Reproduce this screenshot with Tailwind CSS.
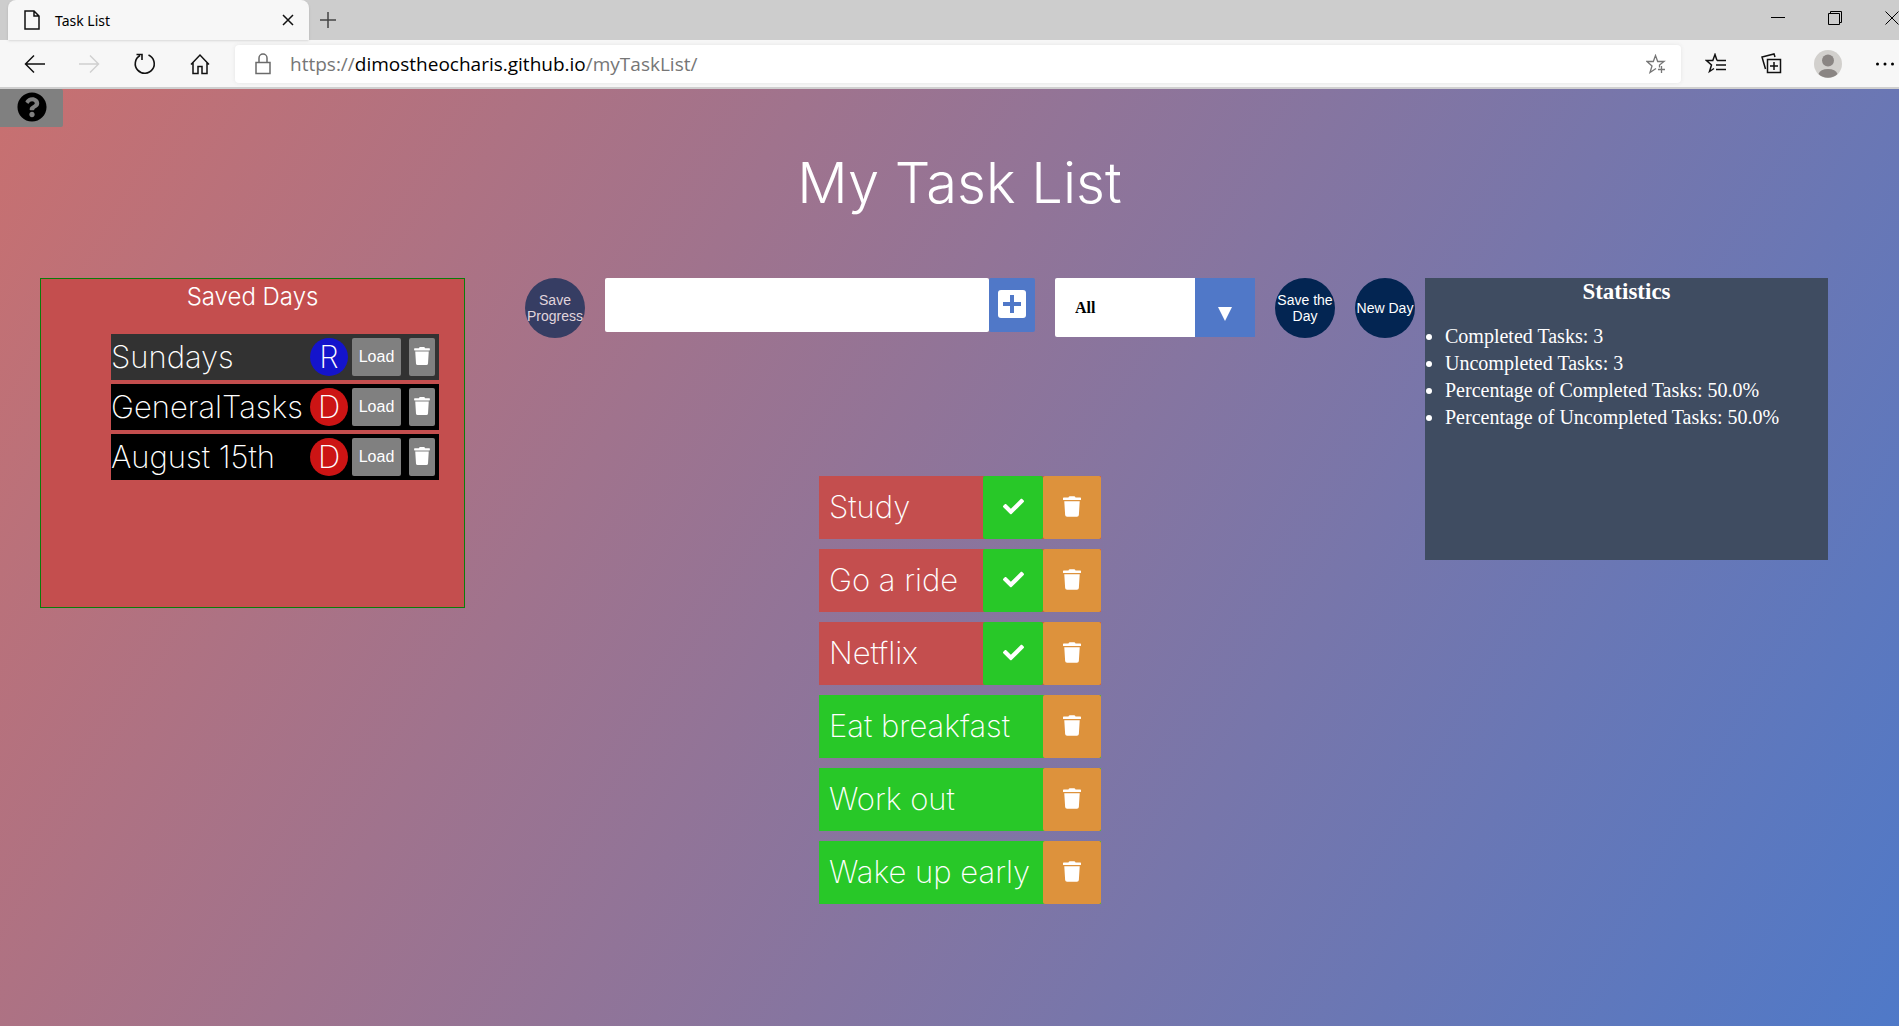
<!DOCTYPE html>
<html lang="en">
<head>
<meta charset="utf-8">
<title>Task List</title>
<script src="https://cdn.jsdelivr.net/npm/@tailwindcss/browser@4"></script>
</head>
<body class="flex min-h-screen flex-col overflow-x-hidden font-['Liberation_Serif',serif]">
<svg class="hidden">
  <symbol id="trash" viewBox="0 0 448 512"><path fill="currentColor" d="M432 32H312l-9.400-18.700A24 24 0 0 0 281.100 0H166.800a23.700 23.700 0 0 0-21.400 13.300L136 32H16A16 16 0 0 0 0 48v32a16 16 0 0 0 16 16h416a16 16 0 0 0 16-16V48a16 16 0 0 0-16-16zM53.200 467a48 48 0 0 0 47.900 45h245.800a48 48 0 0 0 47.900-45L416 128H32z"/></symbol>
  <symbol id="check" viewBox="0 0 512 512"><path fill="currentColor" d="M173.900 439.400l-166.400-166.400c-10-10-10-26.200 0-36.200l36.200-36.200c10-10 26.200-10 36.200 0L192 312.700 432.100 72.600c10-10 26.200-10 36.200 0l36.200 36.200c10 10 10 26.200 0 36.200l-294.400 294.400c-10 10-26.200 10-36.200 0z"/></symbol>
</svg>

<header class="font-['Noto_Sans',sans-serif]">
  <div class="flex h-10 items-center bg-[#cdcdcd]">
    <div class="ml-2 flex h-10 w-[301px] items-center rounded-t-lg bg-[#f7f7f7] pr-[11px] pl-4 shadow">
      <svg class="h-5 w-4" viewBox="0 0 16 20" fill="none" stroke="#111" stroke-width="1.500"><path d="M1 1h9l5 5v13H1zM10 1v5h5"/></svg>
      <span class="ml-[15px] flex-1 text-[14px]">Task List</span>
      <button aria-label="Close tab" class="p-1"><svg class="size-3" viewBox="0 0 12 12" stroke="#111" stroke-width="1.500"><path d="M1 1l10 10M11 1L1 11"/></svg></button>
    </div>
    <button aria-label="New tab" class="ml-[11px]"><svg class="size-4" viewBox="0 0 16 16" stroke="#444" stroke-width="1.500"><path d="M8 0v16M0 8h16"/></svg></button>
    <div class="ml-auto flex items-center gap-[43px] pb-1">
      <button aria-label="Minimize"><svg class="size-[14px]" viewBox="0 0 14 14" stroke="#000"><path d="M0 6.500h14"/></svg></button>
      <button aria-label="Restore"><svg class="size-[14px]" viewBox="0 0 14 14" fill="none" stroke="#000"><path d="M.5 2.500h11v11H.5zM2.500 2.500V.5h11v11h-2"/></svg></button>
      <button aria-label="Close"><svg class="size-[14px]" viewBox="0 0 14 14" stroke="#000"><path d="M.5.5l13 13M13.500.5l-13 13"/></svg></button>
    </div>
  </div>
  <div class="flex h-[49px] items-center border-b-2 border-[#cfcfcf] bg-[#f7f7f7] pl-6">
    <button aria-label="Back"><svg class="size-[22px]" viewBox="0 0 22 22" fill="none" stroke="#111" stroke-width="1.500"><path d="M21 11H2M10 2.500L1.500 11l8.500 8.500"/></svg></button>
    <button aria-label="Forward" class="ml-8"><svg class="size-[22px]" viewBox="0 0 22 22" fill="none" stroke="#d0d0d0" stroke-width="1.500"><path d="M1 11h19M12 2.500l8.500 8.500-8.500 8.500"/></svg></button>
    <button aria-label="Reload" class="ml-[33px]"><svg class="size-[24px]" viewBox="0 0 24 24" fill="none" stroke="#111" stroke-width="1.600"><path d="M15.500 3A9.500 9.500 0 1 1 7 3.500M3.500 2.500h5.500v5.500"/></svg></button>
    <button aria-label="Home" class="ml-8"><svg class="size-[22px]" viewBox="0 0 22 22" fill="none" stroke="#111" stroke-width="1.500"><path d="M2 11.500L11 2l9 9.500M4 9.500V20.500h5v-7h4v7h5V9.500"/></svg></button>
    <div class="ml-6 flex h-[38px] flex-1 items-center rounded bg-white pr-[15px] pl-5 shadow-[0_0_4px_#e4e4e4]">
      <svg class="h-[22px] w-4" viewBox="0 0 16 22" fill="none" stroke="#6b6b6b" stroke-width="1.500"><path d="M1 9.500h14v11H1zM4 9.500V5a4 4 0 0 1 8 0v4.500"/></svg>
      <a href="https://dimostheocharis.github.io/myTaskList/" class="ml-[19px] flex-1 pt-0.5 font-['Open_Sans'] text-[19px] text-[#767676]">https://<span class="text-black">dimostheocharis.github.io</span>/myTaskList/</a>
      <button aria-label="Add to favorites"><svg class="size-[20px]" viewBox="0 0 20 20" fill="none" stroke="#767676" stroke-width="1.300"><path d="M10 14.500L4 18.500 6 12 1 7.500h6.300L9.500 1.500l2.200 6H18L13.500 11V13.500M15.500 12v7M12 15.500h7"/></svg></button>
    </div>
    <div class="flex items-center pr-1 pl-6">
      <button aria-label="Favorites"><svg class="size-[22px]" viewBox="0 0 22 22" fill="none" stroke="#111" stroke-width="1.500"><path d="M12 7.500L10 1.500l-2.200 6H1.500l5 4.500-2 6.500 4.500-3M12 7.500h9M11 12h10M11 16.500h10"/></svg></button>
      <button aria-label="Collections" class="ml-[34px]"><svg class="size-[21px]" viewBox="0 0 21 21" fill="none" stroke="#111" stroke-width="1.500"><path d="M6.500 6.500h13v13h-13zM13 9v8M9 13h8M4.500 16L1 4l12-3 1 3"/></svg></button>
      <button aria-label="Profile" class="ml-8"><svg class="size-7" viewBox="0 0 28 28"><circle cx="14" cy="14" r="14" fill="#d2d0cd"/><circle cx="14" cy="10.500" r="6" fill="#8a8583"/><path fill="#8a8583" d="M4.500 24a9.800 6.500 0 0 1 19 0 14 14 0 0 1-19 0z"/></svg></button>
      <button aria-label="More" class="ml-[33px]"><svg class="h-1 w-5" viewBox="0 0 20 4"><circle cx="2.500" cy="2" r="1.500"/><circle cx="10" cy="2" r="1.500"/><circle cx="17.500" cy="2" r="1.500"/></svg></button>
    </div>
  </div>
</header>

<main class="flex-1 bg-[linear-gradient(120deg,#c87070,#4f79c8)]">
  <button aria-label="Help" class="flex h-[38px] w-[63px] justify-center rounded-r-xs bg-[#808080] pt-[3px]"><svg class="size-[30px]" viewBox="0 0 512 512"><path d="M504 256c0 137-111 248-248 248S8 393 8 256C8 119 119 8 256 8s248 111 248 248zM262.700 90c-54.500 0-89.300 23-116.500 63.800-3.500 5.300-2.400 12.400 2.700 16.300l34.700 26.300c5.200 3.900 12.600 3 16.700-2.100 17.900-22.700 30.100-35.800 57.300-35.800 20.400 0 45.700 13.100 45.700 33 0 15-12.400 22.700-32.500 34C247 238.500 216 254.900 216 296v4c0 6.600 5.400 12 12 12h56c6.600 0 12-5.400 12-12v-1.300c0-28.500 83.200-29.600 83.200-106.700 0-58-60.200-102-116.500-102zM256 338c-25.400 0-46 20.600-46 46s20.600 46 46 46 46-20.600 46-46-20.600-46-46-46z"/></svg></button>
  <h1 class="mt-5 ml-5 text-center font-['Inter'] text-[56px] leading-[72px] font-light text-white">My Task List</h1>

  <div class="mt-[59px] flex items-start pr-[71px] pl-10">
    <section class="min-h-[330px] w-[425px] shrink-0 border border-[#0a7d0a] bg-[#c44e4e]">
      <h2 class="pt-[2px] text-center font-['Inter'] text-[24px] leading-8 font-light text-white">Saved Days</h2>
      <ul class="mt-[21px] mr-[25px] ml-[70px] flex flex-col gap-1 font-['Inter'] text-[31px] font-extralight text-white">
        <li class="flex h-[46px] items-center bg-[#323232] pr-1"><span class="flex-1">Sundays</span><span class="flex size-[38px] items-center justify-center rounded-full bg-[#1414cc]">R</span><button class="ml-1 h-[38px] w-[49px] rounded-xs bg-[#808080] font-['Liberation_Sans'] text-[16px] font-normal">Load</button><button aria-label="Delete" class="ml-2 flex h-[38px] w-[26px] justify-center rounded-xs bg-[#808080] pt-[9px]"><svg class="h-[18px] w-4"><use href="#trash"/></svg></button></li>
        <li class="flex h-[46px] items-center bg-black pr-1"><span class="flex-1">GeneralTasks</span><span class="flex size-[38px] items-center justify-center rounded-full bg-[#cc1414]">D</span><button class="ml-1 h-[38px] w-[49px] rounded-xs bg-[#808080] font-['Liberation_Sans'] text-[16px] font-normal">Load</button><button aria-label="Delete" class="ml-2 flex h-[38px] w-[26px] justify-center rounded-xs bg-[#808080] pt-[9px]"><svg class="h-[18px] w-4"><use href="#trash"/></svg></button></li>
        <li class="flex h-[46px] items-center bg-black pr-1"><span class="flex-1">August 15th</span><span class="flex size-[38px] items-center justify-center rounded-full bg-[#cc1414]">D</span><button class="ml-1 h-[38px] w-[49px] rounded-xs bg-[#808080] font-['Liberation_Sans'] text-[16px] font-normal">Load</button><button aria-label="Delete" class="ml-2 flex h-[38px] w-[26px] justify-center rounded-xs bg-[#808080] pt-[9px]"><svg class="h-[18px] w-4"><use href="#trash"/></svg></button></li>
      </ul>
    </section>

    <section class="mr-[10px] ml-10 flex-1">
      <div class="flex items-start gap-5 pl-5 font-['Liberation_Sans',sans-serif] text-[14px] leading-4 text-white">
        <button class="size-[60px] shrink-0 rounded-full bg-[#363d63] text-[#e0d5dd]">Save Progress</button>
        <form class="flex flex-1">
          <input type="text" aria-label="New task" class="h-[54px] w-0 flex-1 rounded-xs bg-white px-3 text-black outline-none">
          <button type="button" aria-label="Add task" class="flex h-[54px] w-[46px] justify-center rounded-xs bg-[#5078c8] pt-3"><svg class="size-[28px]" viewBox="0 0 28 28"><rect y="0" width="28" height="28" rx="3" fill="#fff"/><path d="M14 5v18M5 14h18" stroke="#5078c8" stroke-width="4"/></svg></button>
        </form>
        <div class="relative h-[59px] w-[200px] shrink-0">
          <select aria-label="Filter tasks" class="size-full appearance-none rounded-xs bg-white pl-5 font-['Liberation_Serif'] text-[16px] font-bold text-black"><option>All</option><option>Completed</option><option>Uncompleted</option></select>
          <span class="pointer-events-none absolute inset-y-0 right-0 flex w-[60px] items-center justify-center bg-[#5078c8] pt-3"><svg class="size-[14px]" viewBox="0 0 14 14"><path fill="#fff" d="M0 0h14L7 14z"/></svg></span>
        </div>
        <button class="size-[60px] shrink-0 rounded-full bg-[#032552]">Save the Day</button>
        <button class="size-[60px] shrink-0 rounded-full bg-[#032552] whitespace-nowrap">New Day</button>
      </div>
      <ul class="mx-auto mt-[138px] flex w-[282px] flex-col gap-[10px] font-['Inter'] text-[31px] font-extralight text-white">
        <li class="flex h-[63px] items-center bg-[#c44e4e]"><span class="flex-1 pl-[10px] whitespace-nowrap">Study</span><button aria-label="Complete" class="flex h-full w-[60px] justify-center rounded-xs bg-[#28c828] pt-5"><svg class="size-[21px]"><use href="#check"/></svg></button><button aria-label="Delete" class="flex h-full w-[58px] justify-center rounded-xs bg-[#dd923c] pt-5"><svg class="h-[21px] w-[18px]"><use href="#trash"/></svg></button></li>
        <li class="flex h-[63px] items-center bg-[#c44e4e]"><span class="flex-1 pl-[10px] whitespace-nowrap">Go a ride</span><button aria-label="Complete" class="flex h-full w-[60px] justify-center rounded-xs bg-[#28c828] pt-5"><svg class="size-[21px]"><use href="#check"/></svg></button><button aria-label="Delete" class="flex h-full w-[58px] justify-center rounded-xs bg-[#dd923c] pt-5"><svg class="h-[21px] w-[18px]"><use href="#trash"/></svg></button></li>
        <li class="flex h-[63px] items-center bg-[#c44e4e]"><span class="flex-1 pl-[10px] whitespace-nowrap">Netflix</span><button aria-label="Complete" class="flex h-full w-[60px] justify-center rounded-xs bg-[#28c828] pt-5"><svg class="size-[21px]"><use href="#check"/></svg></button><button aria-label="Delete" class="flex h-full w-[58px] justify-center rounded-xs bg-[#dd923c] pt-5"><svg class="h-[21px] w-[18px]"><use href="#trash"/></svg></button></li>
        <li class="flex h-[63px] items-center bg-[#28c828]"><span class="flex-1 pl-[10px] whitespace-nowrap">Eat breakfast</span><button aria-label="Delete" class="flex h-full w-[58px] justify-center rounded-xs bg-[#dd923c] pt-5"><svg class="h-[21px] w-[18px]"><use href="#trash"/></svg></button></li>
        <li class="flex h-[63px] items-center bg-[#28c828]"><span class="flex-1 pl-[10px] whitespace-nowrap">Work out</span><button aria-label="Delete" class="flex h-full w-[58px] justify-center rounded-xs bg-[#dd923c] pt-5"><svg class="h-[21px] w-[18px]"><use href="#trash"/></svg></button></li>
        <li class="flex h-[63px] items-center bg-[#28c828]"><span class="flex-1 pl-[10px] whitespace-nowrap">Wake up early</span><button aria-label="Delete" class="flex h-full w-[58px] justify-center rounded-xs bg-[#dd923c] pt-5"><svg class="h-[21px] w-[18px]"><use href="#trash"/></svg></button></li>
      </ul>
    </section>

    <section class="min-h-[282px] w-[403px] shrink-0 bg-[#3f4c61] text-white">
      <h2 class="text-center text-[23px] leading-7 font-bold">Statistics</h2>
      <ul class="mt-[17px] list-disc pl-5 text-[20px] leading-[27px]">
        <li>Completed Tasks: 3</li>
        <li>Uncompleted Tasks: 3</li>
        <li>Percentage of Completed Tasks: 50.0%</li>
        <li>Percentage of Uncompleted Tasks: 50.0%</li>
      </ul>
    </section>
  </div>
</main>
</body>
</html>
